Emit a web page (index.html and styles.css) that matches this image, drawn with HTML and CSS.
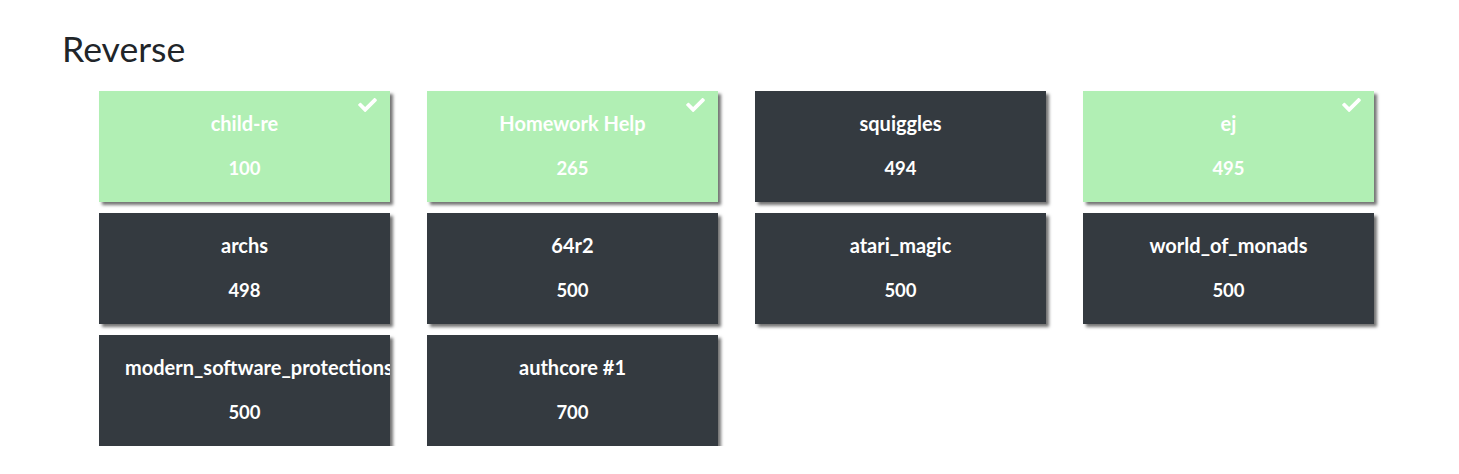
FILE: index.html
```html
<!DOCTYPE html>
<html lang="en">
<head>
<meta charset="utf-8">
<title>Challenges</title>
<link rel="stylesheet" href="styles.css">
</head>
<body>
<div class="page">
  <h3 class="category">Reverse</h3>
  <div class="board">
    <div class="card solved"><svg class="check" viewBox="0 65 512 382"><path d="M173.898 439.404l-166.4-166.4c-9.997-9.997-9.997-26.206 0-36.204l36.203-36.204c9.997-9.998 26.207-9.998 36.204 0L192 312.69 432.095 72.596c9.997-9.997 26.207-9.997 36.204 0l36.203 36.204c9.997 9.997 9.997 26.206 0 36.204l-294.4 294.401c-9.998 9.997-26.207 9.997-36.204-.001z"/></svg><p class="name">child-re</p><p class="pts">100</p></div>
    <div class="card solved"><svg class="check" viewBox="0 65 512 382"><path d="M173.898 439.404l-166.4-166.4c-9.997-9.997-9.997-26.206 0-36.204l36.203-36.204c9.997-9.998 26.207-9.998 36.204 0L192 312.69 432.095 72.596c9.997-9.997 26.207-9.997 36.204 0l36.203 36.204c9.997 9.997 9.997 26.206 0 36.204l-294.4 294.401c-9.998 9.997-26.207 9.997-36.204-.001z"/></svg><p class="name">Homework Help</p><p class="pts">265</p></div>
    <div class="card"><p class="name">squiggles</p><p class="pts">494</p></div>
    <div class="card solved"><svg class="check" viewBox="0 65 512 382"><path d="M173.898 439.404l-166.4-166.4c-9.997-9.997-9.997-26.206 0-36.204l36.203-36.204c9.997-9.998 26.207-9.998 36.204 0L192 312.69 432.095 72.596c9.997-9.997 26.207-9.997 36.204 0l36.203 36.204c9.997 9.997 9.997 26.206 0 36.204l-294.4 294.401c-9.998 9.997-26.207 9.997-36.204-.001z"/></svg><p class="name">ej</p><p class="pts">495</p></div>
    <div class="card"><p class="name">archs</p><p class="pts">498</p></div>
    <div class="card"><p class="name">64r2</p><p class="pts">500</p></div>
    <div class="card"><p class="name">atari_magic</p><p class="pts">500</p></div>
    <div class="card"><p class="name">world_of_monads</p><p class="pts">500</p></div>
    <div class="card"><p class="name">modern_software_protections</p><p class="pts">500</p></div>
    <div class="card"><p class="name">authcore #1</p><p class="pts">700</p></div>
  </div>
</div>
</body>
</html>
```

FILE: styles.css
```css
html, body {
  margin: 0;
  padding: 0;
  background: #ffffff;
}
body {
  font-family: Lato, "Open Sans", sans-serif;
  color: #212529;
}
.page {
  padding: 28px 0 0 62px;
}
.category {
  margin: 0;
  font-size: 35.6px;
  font-weight: 400;
  line-height: 42px;
  color: #212529;
}
.board {
  display: grid;
  grid-template-columns: repeat(4, 291px);
  grid-auto-rows: 111px;
  column-gap: 37px;
  row-gap: 11px;
  margin: 21px 0 0 37px;
}
.card {
  position: relative;
  background: #343a40;
  color: #ffffff;
  box-shadow: 3px 3px 3px rgba(0, 0, 0, 0.55);
  overflow: hidden;
  text-align: center;
  padding: 20px 26px 0;
  box-sizing: border-box;
  white-space: nowrap;
}
.card.solved {
  background: #b1efb4;
}
.name {
  margin: 0;
  font-size: 20px;
  font-weight: 700;
  line-height: 24px;
}
.pts {
  margin: 22px 0 0;
  font-size: 18.5px;
  font-weight: 700;
  line-height: 22px;
}
.check {
  position: absolute;
  top: 7px;
  right: 13px;
  width: 19px;
  height: 14px;
  fill: #ffffff;
}
```
